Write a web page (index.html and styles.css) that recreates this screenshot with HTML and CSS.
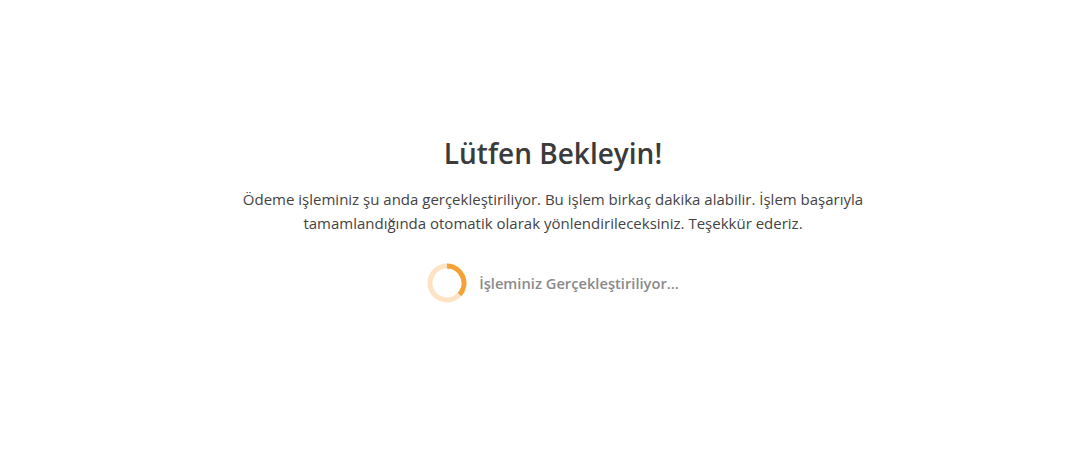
FILE: index.html
```html
<!DOCTYPE html>
<html lang="tr">
<head>
<meta charset="utf-8">
<link rel="stylesheet" href="styles.css">
</head>
<body>
<main class="page">
  <div class="box">
    <h1 class="title">Lütfen Bekleyin!</h1>
    <p class="text">Ödeme işleminiz şu anda gerçekleştiriliyor. Bu işlem birkaç dakika alabilir. İşlem başarıyla<br>tamamlandığında otomatik olarak yönlendirileceksiniz. Teşekkür ederiz.</p>
    <div class="status">
      <svg class="spinner" width="40" height="40" viewBox="0 0 40 40">
        <circle cx="20" cy="20" r="17" fill="none" stroke="#fde3c3" stroke-width="5"/>
        <path d="M20 3 A17 17 0 0 1 32.5 31.5" fill="none" stroke="#f6a135" stroke-width="5"/>
      </svg>
      <span class="status-text">İşleminiz Gerçekleştiriliyor...</span>
    </div>
  </div>
</main>
</body>
</html>
```
FILE: styles.css
```css
html, body { margin: 0; padding: 0; background: #fff; }
.page {
  box-sizing: border-box;
  height: 451px;
  padding: 0 0 14px 16px;
  display: flex;
  align-items: center;
  justify-content: center;
  font-family: "Open Sans", "Noto Sans", sans-serif;
}
.box { display: flex; flex-direction: column; align-items: center; text-align: center; }
.title { margin: 0; font-size: 28px; font-weight: 600; color: #3b3b3b; line-height: 36px; }
.text { margin: 16px 0 0; font-size: 15px; line-height: 24px; color: #444; }
.status { margin-top: 28px; display: flex; align-items: center; gap: 12px; }
.spinner { display: block; }
.status-text { font-size: 14.7px; font-weight: 600; color: #8a8a8a; }
```
